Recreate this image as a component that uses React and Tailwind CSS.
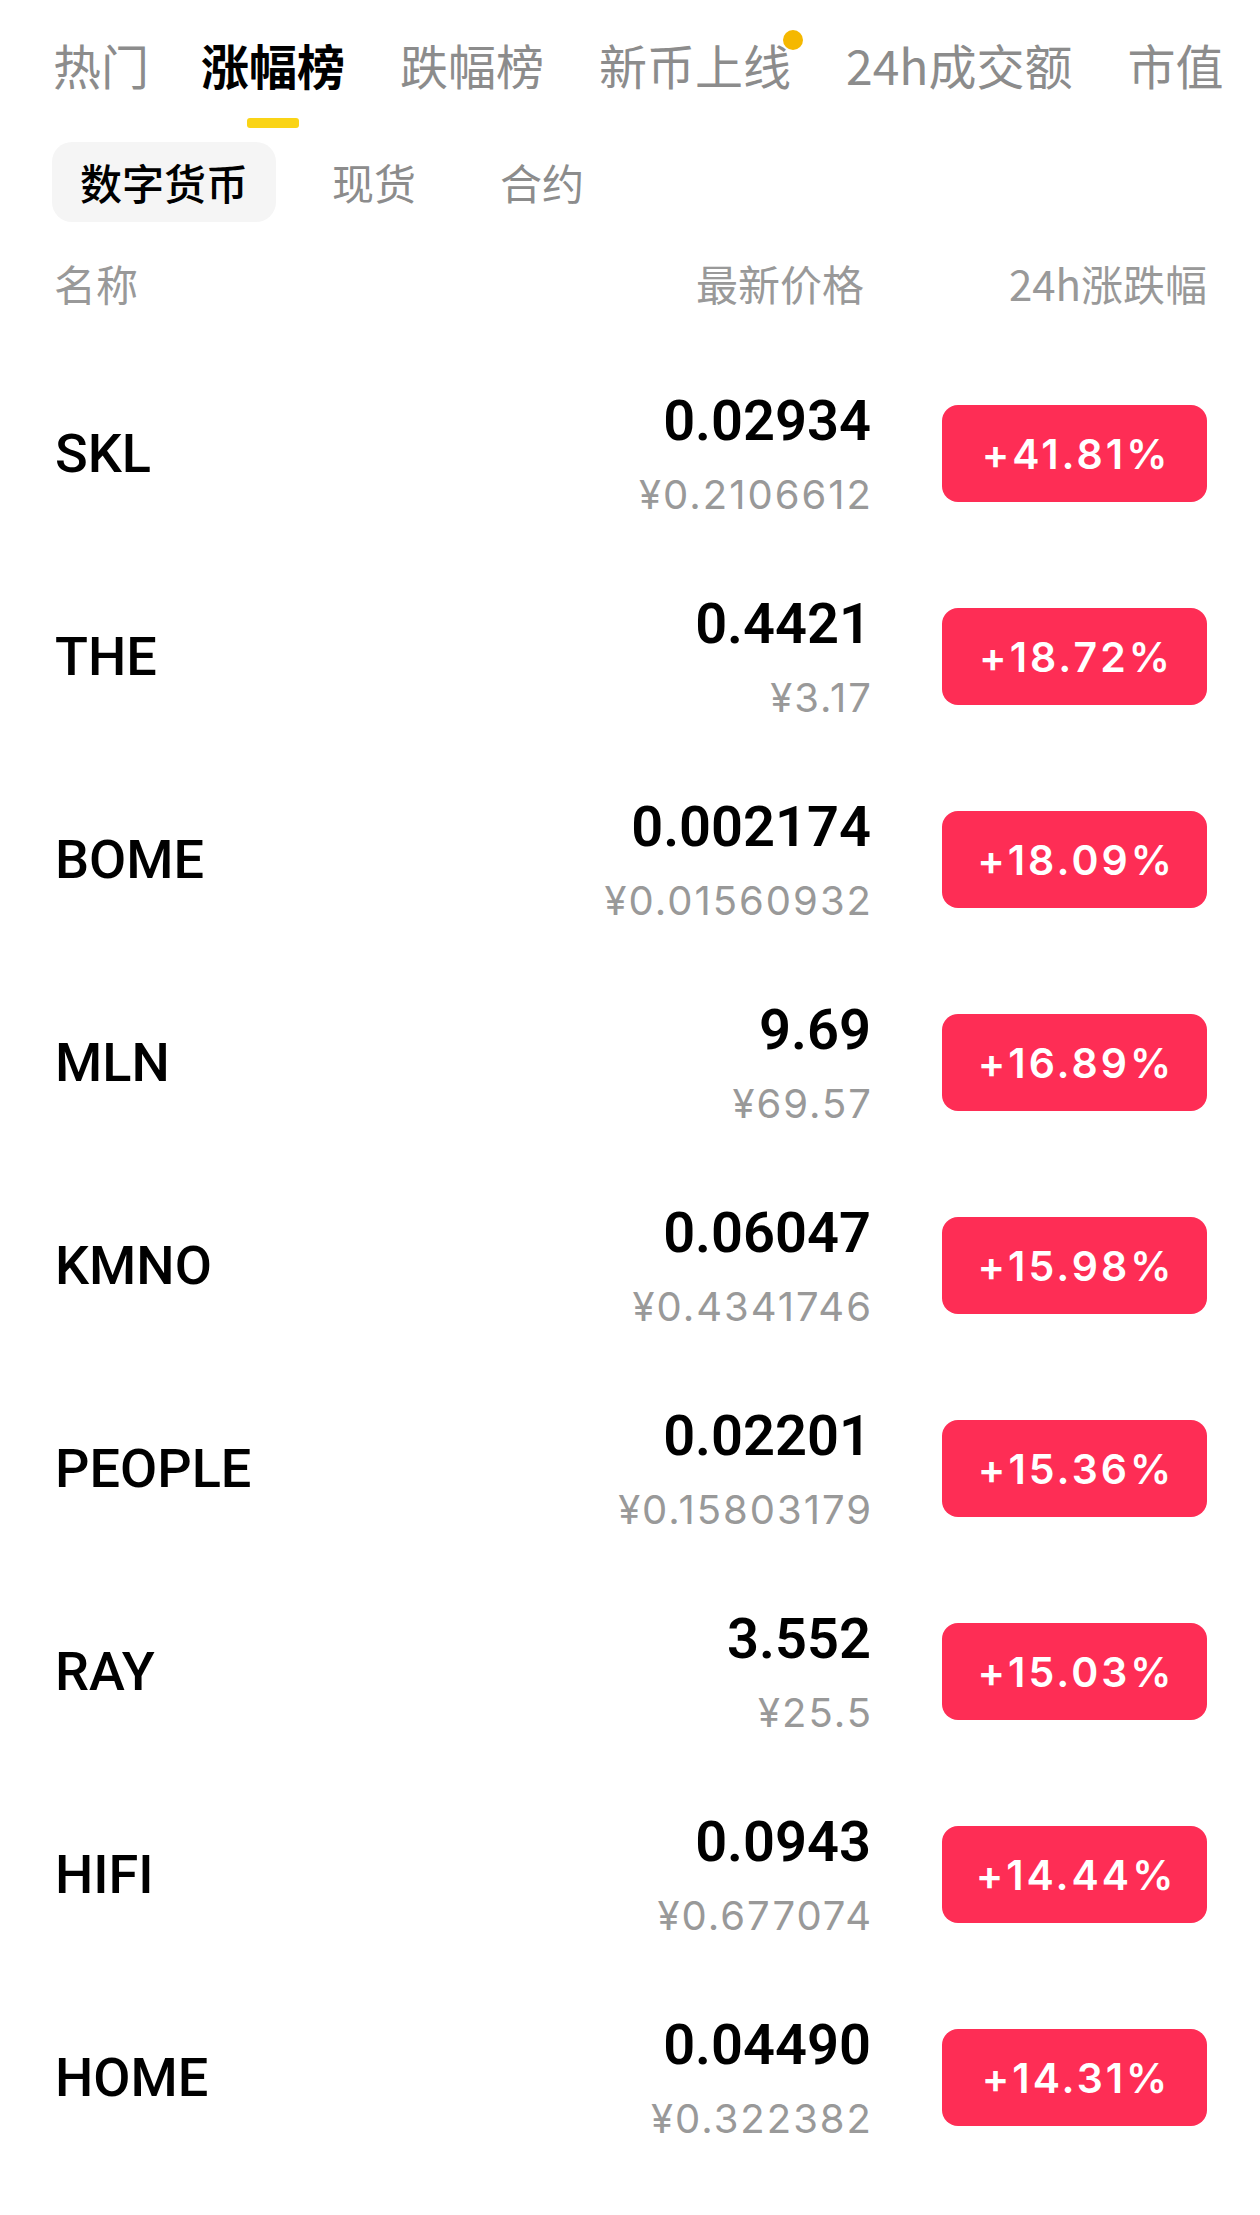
import React from "react";

const rows = [
  ["SKL", "0.02934", "¥0.2106612", "+41.81%"],
  ["THE", "0.4421", "¥3.17", "+18.72%"],
  ["BOME", "0.002174", "¥0.01560932", "+18.09%"],
  ["MLN", "9.69", "¥69.57", "+16.89%"],
  ["KMNO", "0.06047", "¥0.4341746", "+15.98%"],
  ["PEOPLE", "0.02201", "¥0.15803179", "+15.36%"],
  ["RAY", "3.552", "¥25.5", "+15.03%"],
  ["HIFI", "0.0943", "¥0.677074", "+14.44%"],
  ["HOME", "0.04490", "¥0.322382", "+14.31%"],
];

const cjk = { fontFamily: '"Noto Sans CJK SC", "Noto Sans", sans-serif' };
const roboto = { fontFamily: 'Roboto, "Liberation Sans", sans-serif' };
const inter = { fontFamily: 'Inter, "Liberation Sans", sans-serif' };

const topTabs = ["热门", "涨幅榜", "跌幅榜", "新币上线", "24h成交额", "市值"];

export default function App() {
  return (
    <div className="w-[1260px] min-h-[2215px] bg-white overflow-hidden">
      {/* top tabs */}
      <div className="flex gap-[55px] pl-[53px] pt-[40px] whitespace-nowrap" style={cjk}>
        {topTabs.map((t, i) => (
          <div key={t} className={"flex flex-col items-center " + (i === 1 ? "-ml-[3px]" : "")}>
            <div
              className={
                "relative text-[48px] leading-[48px] " +
                (i === 1 ? "text-black font-bold" : "text-[#8c8c8c] font-normal")
              }
            >
              {t}
              {i === 3 && (
                <span className="absolute -top-[10px] -right-[12px] w-[20px] h-[20px] rounded-full bg-[#f5b800]" />
              )}
            </div>
            <div
              className={
                "mt-[30px] h-[10px] w-[52px] rounded-[3px] " +
                (i === 1 ? "bg-[#fad416]" : "bg-transparent")
              }
            />
          </div>
        ))}
      </div>

      {/* sub tabs */}
      <div className="flex gap-[28px] pl-[52px] mt-[14px]" style={cjk}>
        <div className="h-[80px] px-[28px] flex items-center rounded-[20px] bg-[#f5f5f5] text-[42px] leading-[42px] text-black font-medium">
          数字货币
        </div>
        <div className="h-[80px] px-[28px] flex items-center text-[42px] leading-[42px] text-[#8c8c8c]">
          现货
        </div>
        <div className="h-[80px] px-[28px] flex items-center text-[42px] leading-[42px] text-[#8c8c8c]">
          合约
        </div>
      </div>

      {/* header */}
      <div className="flex items-center pl-[54px] pr-[53px] mt-[33px] h-[56px] text-[42px] leading-[56px] text-[#999999]" style={cjk}>
        <div className="flex-1">名称</div>
        <div className="text-right pr-[5px]">最新价格</div>
        <div className="w-[338px] text-right">24h涨跌幅</div>
      </div>

      {/* rows */}
      <div className="mt-[41px] pl-[55px] pr-[53px]">
        {rows.map(([name, price, cny, chg]) => (
          <div key={name} className="h-[203px] flex items-center">
            <div className="flex-1 text-[54px] leading-[64px] font-medium text-black" style={roboto}>
              {name}
            </div>
            <div className="flex flex-col items-end">
              <div className="text-[56px] leading-[64px] font-semibold text-black" style={roboto}>
                {price}
              </div>
              <div className="mt-[18px] -mr-[2px] text-[40px] leading-[48px] tracking-[2px] text-[#999999]" style={inter}>
                {cny}
              </div>
            </div>
            <div className="ml-[71px] w-[265px] h-[97px] rounded-[16px] bg-[#fe2d55] flex items-center justify-center">
              <span className="pl-[3px] text-white text-[41px] leading-[48px] font-semibold tracking-[3px]" style={inter}>
                {chg}
              </span>
            </div>
          </div>
        ))}
      </div>
    </div>
  );
}
